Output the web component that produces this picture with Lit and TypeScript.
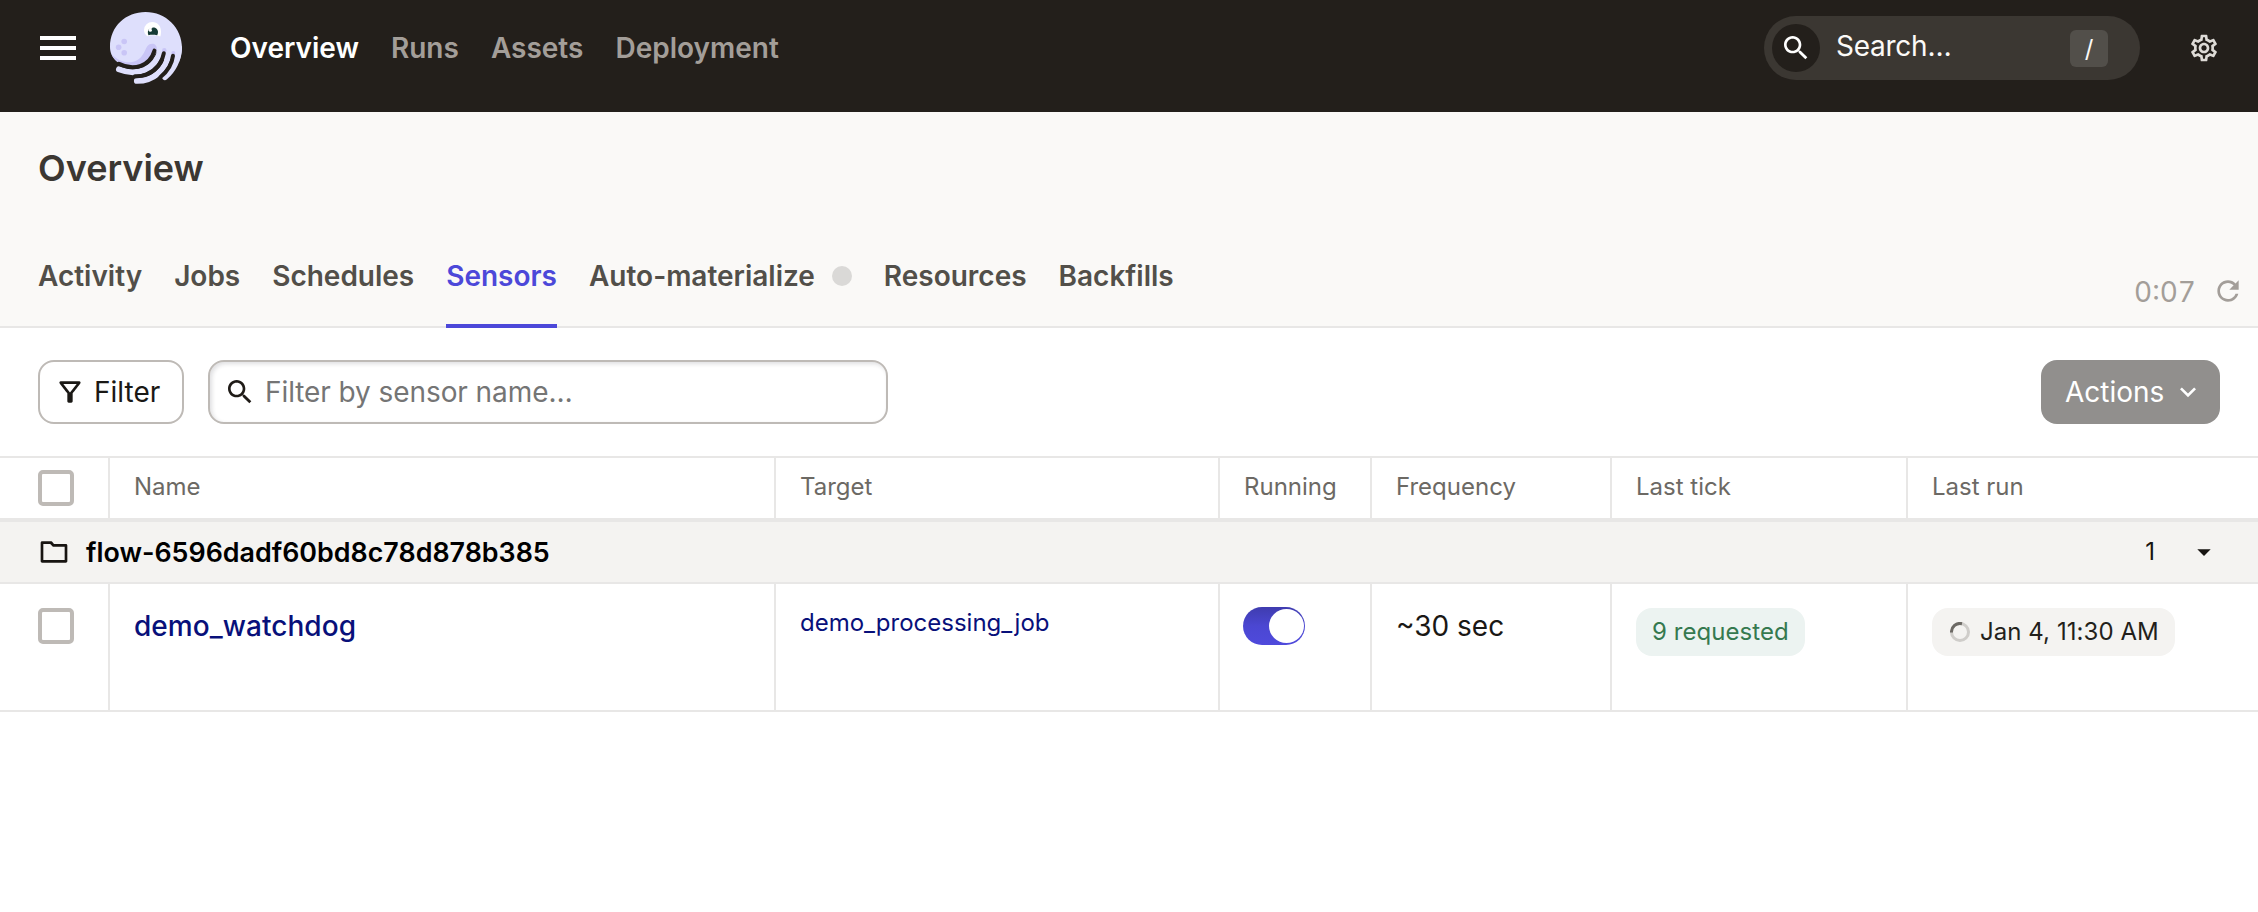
import { LitElement, html, css, svg } from "lit";
import { customElement, property } from "lit/decorators.js";

const ICONS: Record<string, string> = {
  search:
    "M15.5 14h-.79l-.28-.27C15.41 12.59 16 11.11 16 9.5 16 5.91 13.09 3 9.5 3S3 5.91 3 9.5 5.91 16 9.5 16c1.61 0 3.09-.59 4.23-1.57l.27.28v.79l5 4.99L20.49 19l-4.99-5zm-6 0C7.01 14 5 11.99 5 9.5S7.01 5 9.5 5 14 7.01 14 9.5 11.99 14 9.5 14z",
  refresh:
    "M17.65 6.35C16.2 4.9 14.21 4 12 4c-4.42 0-7.99 3.58-7.99 8s3.57 8 7.99 8c3.73 0 6.84-2.55 7.73-6h-2.08c-.82 2.33-3.04 4-5.65 4-3.31 0-6-2.69-6-6s2.69-6 6-6c1.66 0 3.14.69 4.22 1.78L13 11h7V4l-2.35 2.35z",
  filter:
    "M7 6h10l-5.01 6.3L7 6zm-2.75-.39C6.27 8.2 10 13 10 13v6c0 .55.45 1 1 1h2c.55 0 1-.45 1-1v-6s3.72-4.8 5.74-7.39c.51-.66.04-1.61-.79-1.61H5.04c-.83 0-1.3.95-.79 1.61z",
  folder:
    "M9.17 6l2 2H20v10H4V6h5.17M10 4H3.2c-.8 0-1.2.4-1.2 1.2L2 18.8c0 .8.4 1.2 1.2 1.2h17.6c.8 0 1.2-.4 1.2-1.2V7.2c0-.8-.4-1.2-1.2-1.2H12l-1.2-1.5C10.6 4.2 10.4 4 10 4z",
  expand: "M16.59 8.59 12 13.17 7.41 8.59 6 10l6 6 6-6z",
  dropdown: "M7 10l5 5 5-5z",
  settings:
    "M19.43 12.98c.04-.32.07-.64.07-.98 0-.34-.03-.66-.07-.98l2.11-1.65c.19-.15.24-.42.12-.64l-2-3.46c-.09-.16-.26-.25-.44-.25-.06 0-.12.01-.17.03l-2.49 1c-.52-.4-1.08-.73-1.69-.98l-.38-2.65C14.46 2.18 14.25 2 14 2h-4c-.25 0-.46.18-.49.42l-.38 2.65c-.61.25-1.17.59-1.69.98l-2.49-1c-.06-.02-.12-.03-.18-.03-.17 0-.34.09-.43.25l-2 3.46c-.13.22-.07.49.12.64l2.11 1.65c-.04.32-.07.65-.07.98 0 .33.03.66.07.98l-2.11 1.65c-.19.15-.24.42-.12.64l2 3.46c.09.16.26.25.44.25.06 0 .12-.01.17-.03l2.49-1c.52.4 1.08.73 1.69.98l.38 2.65c.03.24.24.42.49.42h4c.25 0 .46-.18.49-.42l.38-2.65c.61-.25 1.17-.59 1.69-.98l2.49 1c.06.02.12.03.18.03.17 0 .34-.09.43-.25l2-3.46c.12-.22.07-.49-.12-.64l-2.11-1.65zm-1.98-1.71c.04.31.05.52.05.73 0 .21-.02.43-.05.73l-.14 1.13.89.7 1.08.84-.7 1.21-1.27-.51-1.04-.42-.9.68c-.43.32-.84.56-1.25.73l-1.06.43-.16 1.13-.2 1.35h-1.4l-.19-1.35-.16-1.13-1.06-.43c-.43-.18-.83-.41-1.23-.71l-.91-.7-1.06.43-1.27.51-.7-1.21 1.08-.84.89-.7-.14-1.13c-.03-.31-.05-.54-.05-.74s.02-.43.05-.73l.14-1.13-.89-.7-1.08-.84.7-1.21 1.27.51 1.04.42.9-.68c.43-.32.84-.56 1.25-.73l1.06-.43.16-1.13.2-1.35h1.39l.19 1.35.16 1.13 1.06.43c.43.18.83.41 1.23.71l.91.7 1.06-.43 1.27-.51.7 1.21-1.07.85-.89.7.14 1.13zM12 8c-2.21 0-4 1.79-4 4s1.79 4 4 4 4-1.79 4-4-1.79-4-4-4zm0 6c-1.1 0-2-.9-2-2s.9-2 2-2 2 .9 2 2-.9 2-2 2z",
};

@customElement("ui-icon")
class UiIcon extends LitElement {
  @property() name = "";
  static styles = css`
    :host { display: block; width: 32px; height: 32px; flex: none; }
    svg { display: block; width: 32px; height: 32px; fill: currentColor; }
  `;
  render() {
    return html`<svg viewBox="0 0 24 24">${svg`<path d=${ICONS[this.name] ?? ""}></path>`}</svg>`;
  }
}

@customElement("brand-logo")
class BrandLogo extends LitElement {
  static styles = css`
    :host { display: block; width: 72px; height: 72px; flex: none; }
    svg { display: block; overflow: visible; }
    .skin { fill: #dedffc; }
    .arm { fill: none; stroke: #dedffc; stroke-linecap: round; }
    .shade { fill: #c9c5f6; }
    .gap { fill: none; stroke: #231f1b; stroke-width: 4; stroke-linecap: round; }
    .white { fill: #fff; }
    .pupil { fill: #163b36; }
  `;
  render() {
    return html`<svg width="72" height="72" viewBox="0 0 72 72">
      <path class="skin" d="M0 35C0 14 16 0 35.500 0C56 0 72 16 72 36C72 40 71 46 69 50L62 46L56 50L46 40C42 49 34 54.500 22 54.500C9 54.500 0 46 0 35Z"></path>
      <path class="arm" stroke-width="5.800" d="M8.900 57.300C27 64.500 45.500 58 50.500 38"></path>
      <path class="arm" stroke-width="5.800" d="M26.800 68.900C43 69 56 58.500 59.700 40"></path>
      <path class="arm" stroke-width="6" d="M55 65C62 59 68 50 69 36"></path>
      <path class="shade" d="M1.500 42C7 48 14 51 21 50.200C33 48.500 34.500 38 37.500 34C40.500 30 47.500 31 46.800 37.500C43.500 50 33 54.500 22 54.500C12 54.500 4.500 49 1.500 42Z"></path>
      <circle class="shade" cx="54.300" cy="38.300" r="2.200"></circle>
      <circle class="shade" cx="63.300" cy="41" r="2"></circle>
      <path class="gap" d="M44.500 38.600C40 54 24 59.500 9 51.800"></path>
      <path class="gap" d="M53.800 41.300C51 55 40 65 25 64.200"></path>
      <path class="gap" d="M63 43.800C62 52 58 59 50.500 65"></path>
      <circle class="shade" cx="14.200" cy="29.500" r="2.800"></circle>
      <circle class="shade" cx="8.600" cy="35.200" r="2.800"></circle>
      <circle class="shade" cx="14.200" cy="40.700" r="2.800"></circle>
      <path class="white" d="M37.300 24.200C35 22.500 34 20.500 34 18A8.200 8.200 0 0 1 42.300 10C47.500 10 51 14 51 19.500C51 21.500 50.800 23 50.400 24.500C46 22.800 41 22.800 37.300 24.200Z"></path>
      <path class="pupil" d="M38.400 23.200C37.200 20 38 17.500 40 16.800A2 2 0 0 0 42.600 15.600C45.500 15.200 48 17.500 48 20C48 21.300 47.700 22.400 47.200 23.300C44 22.700 41 22.700 38.400 23.200Z"></path>
      <circle class="white" cx="40.300" cy="18.200" r="1.600"></circle>
    </svg>`;
  }
}

const NAV = ["Overview", "Runs", "Assets", "Deployment"];
const TABS = ["Activity", "Jobs", "Schedules", "Sensors", "Auto-materialize", "Resources", "Backfills"];
const COLUMNS = ["Name", "Target", "Running", "Frequency", "Last tick", "Last run"];

@customElement("app-root")
class AppRoot extends LitElement {
  static styles = css`
    :host {
      display: block;
      min-height: 912px;
      background: #fff;
      color: #1a1815;
      font-family: Inter, "Liberation Sans", sans-serif;
      font-size: 28px;
      line-height: 40px;
    }
    * { box-sizing: border-box; }
    .topbar {
      height: 112px;
      padding: 0 38px 16px;
      display: flex;
      align-items: center;
      background: #231f1b;
    }
    .burger { width: 40px; padding: 0 2px; display: grid; gap: 6px; margin-right: 32px; }
    .burger span { height: 4px; background: #fff; }
    .nav { display: flex; gap: 32px; margin-left: 48px; font-weight: 600; color: #a39e99; }
    .nav .on { color: #fff; }
    .search {
      margin-left: auto;
      width: 376px;
      height: 64px;
      border-radius: 32px;
      padding: 0 32px 0 8px;
      display: flex;
      align-items: center;
      background: #3b3732;
      color: #fbfaf8;
    }
    .lens { width: 48px; height: 48px; border-radius: 50%; padding: 8px; background: #231f1b; color: #fff; }
    .hint { margin-left: 16px; padding-bottom: 4px; flex: 1; letter-spacing: -0.25px; }
    .key {
      width: 38px; height: 37px; border-radius: 6px; background: #524f4a;
      font-size: 24px; line-height: 37px; text-align: center;
    }
    .gear { margin-left: 48px; color: #dedbd7; }
    .header {
      height: 216px;
      padding: 36px 14px 0 38px;
      display: flex;
      flex-direction: column;
      justify-content: space-between;
      background: #faf9f7;
      box-shadow: inset 0 -2px #e8e7e6;
    }
    .title { margin: 0; font-size: 36px; line-height: 40px; font-weight: 600; color: #3b3732; }
    .tabline { display: flex; justify-content: space-between; align-items: flex-end; }
    .tabs { display: flex; gap: 32px; font-weight: 600; color: #524f49; }
    .tab { display: flex; align-items: center; gap: 17px; height: 72px; padding-bottom: 32px; letter-spacing: -0.01px; }
    .tab.on { color: #4c48d9; box-shadow: inset 0 -4px #4c48d9; }
    .dot { width: 20px; height: 20px; border-radius: 50%; background: #dad9d7; }
    .timer { display: flex; gap: 16px; align-items: center; padding-bottom: 16px; color: #a39e99; font-variant-numeric: tabular-nums; }
    .timer ui-icon { margin-bottom: 3px; }
    .toolbar { height: 128px; padding: 0 38px; display: flex; align-items: center; }
    .box { height: 64px; border: 2px solid #bebab6; border-radius: 16px; display: flex; align-items: center; }
    .filter { width: 146px; padding-left: 14px; gap: 8px; margin-right: 24px; }
    .field {
      width: 680px; padding-left: 14px; gap: 9px; color: #1f1b17;
      box-shadow: inset 2px 2px 4px rgba(30, 25, 40, 0.14);
    }
    .placeholder { color: #757575; letter-spacing: -0.08px; }
    .actions {
      margin-left: auto; width: 179px; height: 64px; border-radius: 16px; padding: 0 16px 0 24px;
      display: flex; align-items: center; justify-content: space-between; background: #918f8d; color: #fff;
    }
    .row {
      display: grid;
      grid-template-columns: 110px 666px 444px 152px 240px 296px 1fr;
      border-bottom: 2px solid #e8e7e6;
    }
    .cell { padding-left: 24px; border-right: 2px solid #e8e7e6; }
    .cell:first-child { padding-left: 38px; }
    .cell:last-child { border-right: 0; }
    .head { height: 64px; border-top: 2px solid #e8e7e6; font-size: 24px; line-height: 32px; color: #6c6964; }
    .head .cell { padding-top: 13px; }
    .head .cell:first-child { padding-top: 12px; }
    .check { width: 36px; height: 36px; border: 4px solid #bebab6; border-radius: 5px; }
    .group {
      height: 64px; padding: 0 38px; display: flex; align-items: center; background: #f4f3f1;
      border-top: 2px solid #e8e7e6; border-bottom: 2px solid #e8e7e6; color: #171411;
    }
    .repo { margin-left: 16px; font-size: 26.85px; font-weight: 600; flex: 1; color: #000; }
    .count { font-size: 24px; margin-right: 33px; }
    .body { height: 128px; }
    .body .cell { padding-top: 22px; }
    .body .cell.low { padding-top: 24px; }
    .link { color: #08107a; font-weight: 500; letter-spacing: 0.05px; }
    .link.small { font-size: 24px; line-height: 34px; font-weight: 400; letter-spacing: 0; }
    .toggle {
      width: 62px; height: 38px; border-radius: 19px; margin-top: 1px; margin-left: -1px; padding: 2px 1px;
      display: flex; justify-content: flex-end; background: linear-gradient(#3f3caf, #4b47d2 50%, #4f4adc);
    }
    .knob { width: 35px; height: 34px; border-radius: 50%; background: #fff; }
    .tag {
      height: 48px; width: max-content; border-radius: 16px; padding: 0 16px; font-size: 24px;
      display: flex; align-items: center; gap: 10px; letter-spacing: 0.06px;
    }
    .ok { background: #ecf3f1; color: #35794f; }
    .run { background: #f4f3f1; color: #231f1b; }
    .spin { display: block; margin-left: 2px; }
  `;

  render() {
    return html`
      <header class="topbar">
        <div class="burger"><span></span><span></span><span></span></div>
        <brand-logo></brand-logo>
        <nav class="nav">${NAV.map((n, i) => html`<span class=${i ? "" : "on"}>${n}</span>`)}</nav>
        <div class="search">
          <div class="lens"><ui-icon name="search"></ui-icon></div>
          <span class="hint">Search…</span>
          <span class="key">/</span>
        </div>
        <ui-icon class="gear" name="settings"></ui-icon>
      </header>
      <section class="header">
        <h1 class="title">Overview</h1>
        <div class="tabline">
          <div class="tabs">
            ${TABS.map((t) => html`<div class="tab ${t === "Sensors" ? "on" : ""}">
              <span>${t}</span>${t === "Auto-materialize" ? html`<span class="dot"></span>` : ""}
            </div>`)}
          </div>
          <div class="timer"><span>0:07</span><ui-icon name="refresh"></ui-icon></div>
        </div>
      </section>
      <section class="toolbar">
        <div class="box filter"><ui-icon name="filter"></ui-icon><span>Filter</span></div>
        <div class="box field"><ui-icon name="search"></ui-icon><span class="placeholder">Filter by sensor name…</span></div>
        <div class="actions"><span>Actions</span><ui-icon name="expand"></ui-icon></div>
      </section>
      <section>
        <div class="row head">
          <div class="cell"><div class="check"></div></div>
          ${COLUMNS.map((c) => html`<div class="cell">${c}</div>`)}
        </div>
        <div class="group">
          <ui-icon name="folder"></ui-icon>
          <span class="repo">flow-6596dadf60bd8c78d878b385</span>
          <span class="count">1</span>
          <ui-icon name="dropdown"></ui-icon>
        </div>
        <div class="row body">
          <div class="cell low"><div class="check"></div></div>
          <div class="cell"><span class="link">demo_watchdog</span></div>
          <div class="cell"><div class="link small">demo_processing_job</div></div>
          <div class="cell"><div class="toggle"><div class="knob"></div></div></div>
          <div class="cell">~30 sec</div>
          <div class="cell low"><div class="tag ok">9 requested</div></div>
          <div class="cell low">
            <div class="tag run">
              <svg class="spin" width="20" height="20" viewBox="0 0 20 20" fill="none" stroke-width="3">
                <circle cx="10" cy="10" r="8.500" stroke="#cfcdca"></circle>
                <path d="M1.500 10.500A8.500 8.500 0 0 1 12 1.700" stroke="#6c6964"></path>
              </svg>
              <span>Jan 4, 11:30 AM</span>
            </div>
          </div>
        </div>
      </section>
    `;
  }
}
